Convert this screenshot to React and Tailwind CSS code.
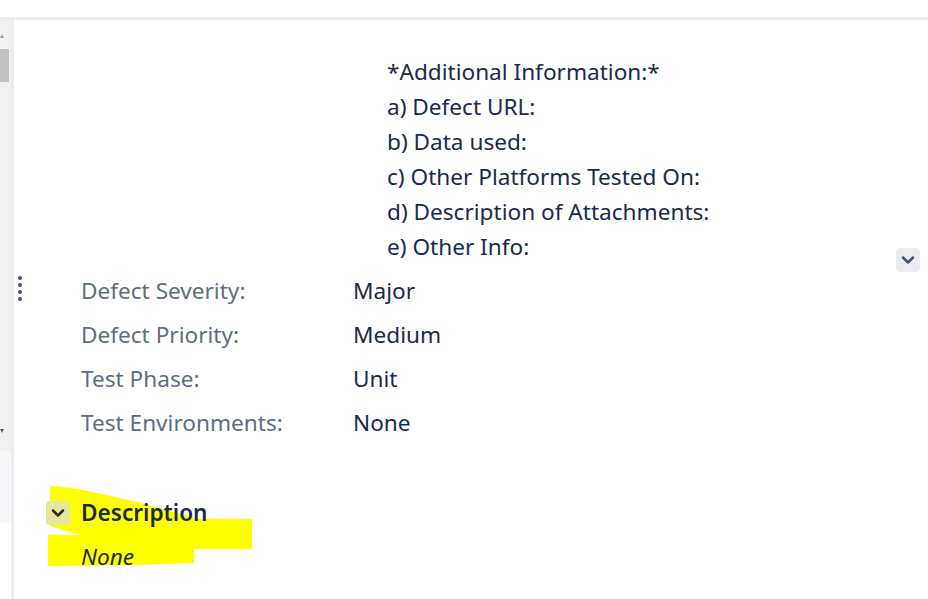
import { ChevronDown } from 'lucide-react'

const fields = [
  { label: 'Defect Severity:', value: 'Major' },
  { label: 'Defect Priority:', value: 'Medium' },
  { label: 'Test Phase:', value: 'Unit' },
  { label: 'Test Environments:', value: 'None' }
]

const extraInfo = [
  '*Additional Information:*',
  'a) Defect URL:',
  'b) Data used:',
  'c) Other Platforms Tested On:',
  'd) Description of Attachments:',
  'e) Other Info:'
]

const App = () => {
  return (
    <div
      className="w-[928px] h-[599px] overflow-hidden bg-white flex flex-col"
      style={{ fontFamily: '"Noto Sans", "Open Sans", sans-serif' }}
    >
      {/* top strip */}
      <div className="h-[17px] bg-white shrink-0" />
      <div className="h-[3px] bg-[#ebecf0] shrink-0" />

      <div className="flex flex-1">
        {/* scrollbar */}
        <div className="w-[11px] flex flex-col bg-[#f0f0f0]">
          <div className="h-[14px]" />
          <svg width="4" height="4" viewBox="0 0 4 4">
            <path d="M0 4 L4 4 L2 0 Z" fill="#a3a3a3" />
          </svg>
          <div className="h-[11px]" />
          <div className="h-[33px] w-[9px] bg-[#c1c1c1]" />
          <div className="flex-1" />
          <svg width="4" height="4" viewBox="0 0 4 4">
            <path d="M0 0 L4 0 L2 4 Z" fill="#606060" />
          </svg>
          <div className="h-[18px]" />
          <div className="h-[71px] bg-[#f7f8fa]" />
          <div className="h-[77px] bg-white" />
        </div>
        <div className="w-[3px] bg-[#ebecf0]" />

        {/* main */}
        <div className="flex-1 flex flex-col text-[22.6px] relative">
          <div className="flex pt-[34px]">
            <div className="pl-[373px] flex-1 text-[#172b4d]">
              {extraInfo.map((line) => (
                <div key={line} className="leading-[35px]">{line}</div>
              ))}
            </div>
            <div className="self-end pr-[8px] -mb-[8px]">
              <div className="w-6 h-6 rounded bg-[#ebecf0] flex items-center justify-center">
                <ChevronDown className="w-5 h-5 text-[#42526e]" strokeWidth={3} />
              </div>
            </div>
          </div>

          <div className="flex pt-[5px]">
            <div className="w-[67px] flex justify-start pl-[4px] pt-[7px]">
              <div className="flex flex-col gap-[3px]">
                {[0, 1, 2, 3].map((i) => (
                  <span key={i} className="w-[4px] h-[4px] rounded-full bg-[#42526e]" />
                ))}
              </div>
            </div>
            <div className="flex flex-col">
              {fields.map((f) => (
                <div key={f.label} className="flex h-[44px] items-center">
                  <div className="w-[272px] text-[#5e6c84]">{f.label}</div>
                  <div className="text-[#172b4d]">{f.value}</div>
                </div>
              ))}
            </div>
          </div>

          {/* description section */}
          <div className="relative mt-[56px] pl-[32px]">
            <svg
              className="absolute left-[34px] -top-[15px]"
              width="206"
              height="82"
              viewBox="0 0 206 82"
            >
              <path
                d="M2 0 L24 2 Q80 12 150 33 L204 33 L204 63 L146 63 L146 77 L90 79 L0 80 L0 49 L32 49 L2 40 Z"
                fill="#ffff00"
              />
            </svg>
            <div className="relative flex items-center h-[24px]">
              <div className="w-6 h-6 rounded bg-[#e6e6a0] flex items-center justify-center">
                <ChevronDown className="w-5 h-5 text-[#2b2b1a]" strokeWidth={3} />
              </div>
              <div className="ml-[11px] font-semibold text-[#172b4d]">Description</div>
            </div>
            <div className="relative pl-[35px] mt-[21px] italic text-[#172b4d] leading-none">None</div>
          </div>
        </div>
      </div>
    </div>
  )
}

export default App
